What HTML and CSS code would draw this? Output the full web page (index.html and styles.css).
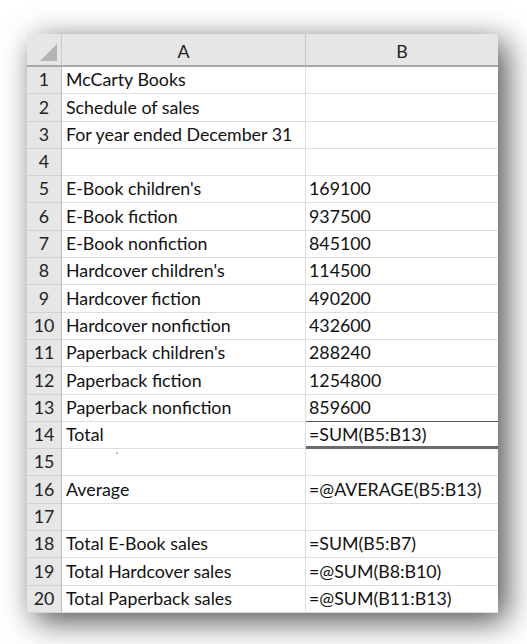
FILE: index.html
```html
<!DOCTYPE html>
<html>
<head>
<meta charset="utf-8">
<link rel="stylesheet" href="styles.css">
</head>
<body>
<div class="page">
  <div class="sheet">
    <div class="corner"><span class="tri"></span></div>
    <div class="colhead">A</div>
    <div class="colhead last">B</div>

    <div class="rh">1</div><div class="ca">McCarty Books</div><div class="cb"></div>
    <div class="rh">2</div><div class="ca">Schedule of sales</div><div class="cb"></div>
    <div class="rh">3</div><div class="ca">For year ended December 31</div><div class="cb"></div>
    <div class="rh">4</div><div class="ca"></div><div class="cb"></div>
    <div class="rh">5</div><div class="ca">E-Book children's</div><div class="cb">169100</div>
    <div class="rh">6</div><div class="ca">E-Book fiction</div><div class="cb">937500</div>
    <div class="rh">7</div><div class="ca">E-Book nonfiction</div><div class="cb">845100</div>
    <div class="rh">8</div><div class="ca">Hardcover children's</div><div class="cb">114500</div>
    <div class="rh">9</div><div class="ca">Hardcover fiction</div><div class="cb">490200</div>
    <div class="rh">10</div><div class="ca">Hardcover nonfiction</div><div class="cb">432600</div>
    <div class="rh">11</div><div class="ca">Paperback children's</div><div class="cb">288240</div>
    <div class="rh">12</div><div class="ca">Paperback fiction</div><div class="cb">1254800</div>
    <div class="rh">13</div><div class="ca">Paperback nonfiction</div><div class="cb before-total">859600</div>
    <div class="rh">14</div><div class="ca">Total</div><div class="cb total">=SUM(B5:B13)</div>
    <div class="rh">15</div><div class="ca"><span class="dot"></span></div><div class="cb"></div>
    <div class="rh">16</div><div class="ca">Average</div><div class="cb">=@AVERAGE(B5:B13)</div>
    <div class="rh">17</div><div class="ca"></div><div class="cb"></div>
    <div class="rh">18</div><div class="ca">Total E-Book sales</div><div class="cb">=SUM(B5:B7)</div>
    <div class="rh">19</div><div class="ca">Total Hardcover sales</div><div class="cb">=@SUM(B8:B10)</div>
    <div class="rh">20</div><div class="ca">Total Paperback sales</div><div class="cb">=@SUM(B11:B13)</div>
  </div>
</div>
</body>
</html>
```
FILE: styles.css
```css
html, body {
  margin: 0;
  padding: 0;
  background: #ffffff;
}
.page {
  width: 527px;
  height: 644px;
  padding: 34px 0 0 27px;
  box-sizing: border-box;
  overflow: hidden;
}
.sheet {
  display: grid;
  grid-template-columns: 35px 244px 192px;
  grid-template-rows: 33px repeat(20, 27.3px);
  width: 471px;
  background: #ffffff;
  box-shadow: 8px 8px 30px rgba(0, 0, 0, 0.7);
  font-family: "Lato", "Liberation Sans", sans-serif;
  font-size: 17.8px;
  color: #111111;
}
.corner {
  background: #e6e6e6;
  border-right: 1px solid #c8c8c8;
  border-bottom: 2px solid #a8a8a8;
  position: relative;
}
.tri {
  position: absolute;
  right: 4px;
  bottom: 4px;
  width: 0;
  height: 0;
  border-left: 17px solid transparent;
  border-bottom: 17px solid #b4b4b4;
}
.colhead {
  background: #e6e6e6;
  border-right: 1px solid #c8c8c8;
  border-bottom: 2px solid #a8a8a8;
  display: flex;
  align-items: flex-end;
  justify-content: center;
  padding-bottom: 3px;
  box-sizing: border-box;
  color: #222;
}
.colhead.last {
  border-right: none;
}
.rh {
  background: #e6e6e6;
  border-right: 1px solid #bdbdbd;
  border-bottom: 1px solid #d2d2d2;
  display: flex;
  align-items: flex-end;
  justify-content: center;
  padding-bottom: 3px;
  box-sizing: border-box;
  color: #222;
}
.ca, .cb {
  border-bottom: 1px solid #dedede;
  display: flex;
  align-items: flex-end;
  padding: 0 0 3px 4px;
  box-sizing: border-box;
  white-space: nowrap;
  position: relative;
}
.ca {
  border-right: 1px solid #dedede;
}
.cb {
  padding-left: 3px;
}
.cb.before-total {
  border-bottom: 1px solid #5a5a5a;
}
.cb.total {
  border-bottom: 3px solid #6a6a6a;
  padding-bottom: 1px;
}
.dot {
  position: absolute;
  left: 54px;
  top: 3px;
  width: 2px;
  height: 2px;
  background: #e88a9a;
  border-radius: 1px;
}
```
